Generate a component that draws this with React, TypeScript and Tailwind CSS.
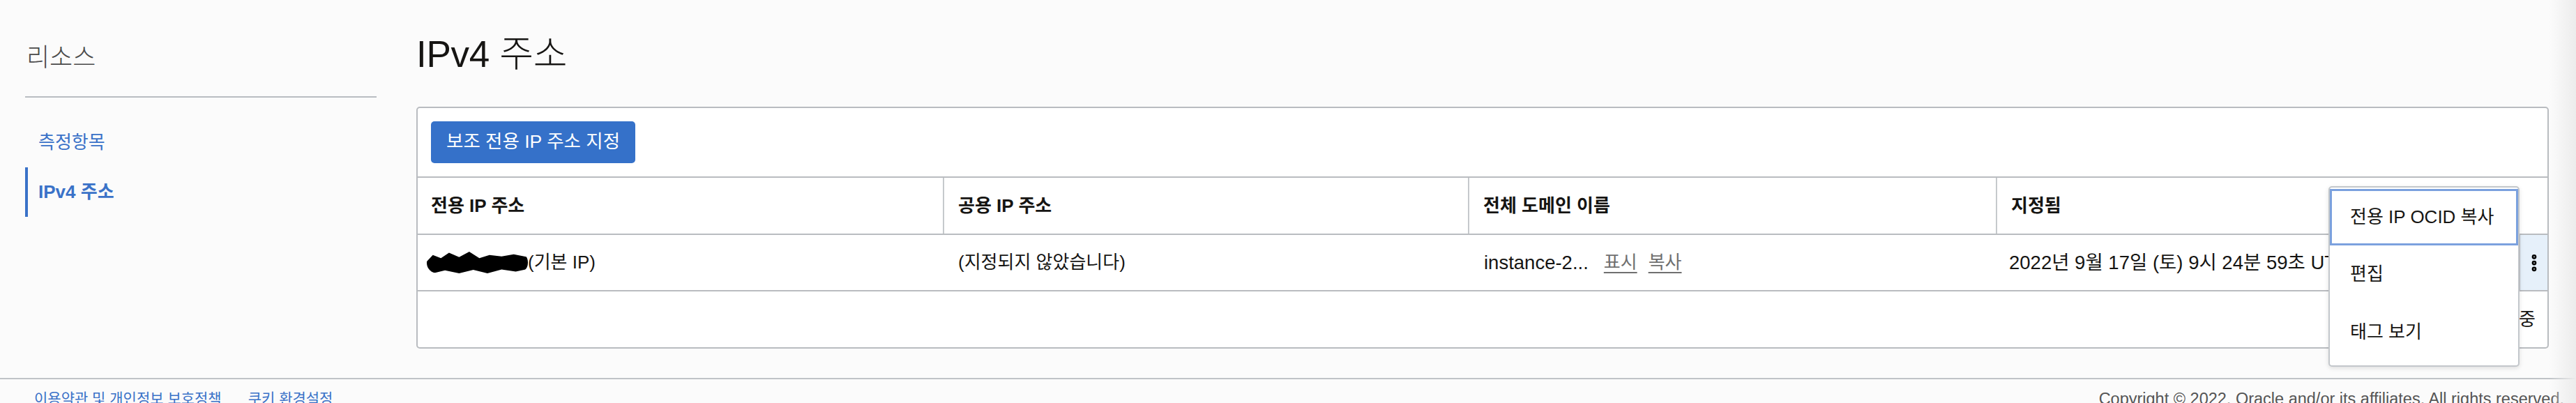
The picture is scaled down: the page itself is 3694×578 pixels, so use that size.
import { EllipsisVertical } from "lucide-react";

const font = "font-['Liberation_Sans','Noto_Sans_CJK_KR',sans-serif]";

const columns = ["전용 IP 주소", "공용 IP 주소", "전체 도메인 이름", "지정됨"];

export default function App() {
  return (
    <div className={`relative h-[578px] w-[3694px] overflow-hidden bg-[#fbfbfb] text-[#161513] ${font}`}>
      <div className="flex h-[542px]">
        <Sidebar />
        <main className="ml-[57px] w-[3058px] pt-[45px]">
          <h1 className="text-[53px] font-light leading-[66px] tracking-[-0.3px]">IPv4 주소</h1>
          <AddressTable />
        </main>
      </div>
      <footer className="flex justify-between border-t-2 border-[#bfc3c7] px-[49px] pt-[13px] text-[21px] leading-[30px]">
        <div className="flex gap-[38px] text-[#3a72c8]">
          <span>이용약관 및 개인정보 보호정책</span>
          <span>쿠키 환경설정</span>
        </div>
        <span className="mr-[-32px] text-[23.5px] text-[#555]">
          Copyright © 2022, Oracle and/or its affiliates. All rights reserved.
        </span>
      </footer>
      {/* side shadow at the right edge */}
      <div className="pointer-events-none absolute right-0 top-0 h-full w-[38px] bg-gradient-to-r from-[#fbfbfb]/0 to-[#ececec]" />
    </div>
  );
}

function Sidebar() {
  return (
    <aside className="ml-[36px] w-[504px] pt-[58px]">
      <div className="pl-[2px] text-[36px] font-light leading-[50px] text-[#4a4a4a]">리소스</div>
      <div className="mt-[30px] h-[2px] bg-[#b9bdc1]" />
      <nav className="mt-[28px] grid text-[26px]">
        <a className="flex h-[72px] items-center border-l-4 border-transparent pl-[15px] text-[#3a72c8]">측정항목</a>
        <a className="flex h-[71px] items-center border-l-4 border-[#3a72c8] pl-[15px] font-bold text-[#3a72c8]">IPv4 주소</a>
      </nav>
    </aside>
  );
}

function AddressTable() {
  return (
    <section className="relative mt-[42px] rounded-[5px] border-2 border-[#b9bcc0] bg-white">
      <div className="px-[19px] pb-[19px] pt-[19px]">
        <button className="h-[60px] rounded-[5px] bg-[#3571c9] px-[22px] text-[26.5px] text-white">
          보조 전용 IP 주소 지정
        </button>
      </div>

      <div className="grid grid-cols-[753px_753px_757px_750px_1fr] border-y-2 border-[#b9bcc0] text-[26px] font-bold">
        {columns.map((column, index) => (
          <div
            key={column}
            className={`flex h-[80px] items-center pl-[19px] ${index > 0 ? "border-l-2 border-[#c6c9cc] pl-[20px]" : ""}`}
          >
            {column}
          </div>
        ))}
        <div />
      </div>

      <div className="grid grid-cols-[753px_753px_757px_750px_1fr] border-b-2 border-[#b9bcc0] text-[26px]">
        <div className="flex h-[79px] items-center pl-[13px]">
          <span className="inline-block h-[31px] w-[145px] rounded-[15px] bg-black [clip-path:polygon(0_45%,6%_15%,14%_30%,22%_5%,32%_25%,42%_0,52%_30%,62%_15%,74%_22%,86%_12%,100%_25%,100%_80%,88%_92%,74%_82%,60%_100%,46%_84%,32%_100%,18%_86%,6%_100%,0_80%)]" />
          (기본 IP)
        </div>
        <div className="flex items-center pl-[22px]">(지정되지 않았습니다)</div>
        <div className="flex items-center pl-[23px] text-[27.5px]">
          <span className="mr-[22px]">instance-2...</span>
          <span className="mr-[16px] text-[26px] text-[#6f6f6f] underline underline-offset-[5px]">표시</span>
          <span className="text-[26px] text-[#6f6f6f] underline underline-offset-[5px]">복사</span>
        </div>
        <div className="flex items-center overflow-hidden whitespace-nowrap pl-[19px] text-[27.5px]">
          2022년 9월 17일 (토) 9시 24분 59초 UTC
        </div>
        <div className="flex items-center justify-center border-l-2 border-[#b9bcc0] bg-[#e6f0fa]">
          <EllipsisVertical size={30} strokeWidth={3.4} className="text-black" />
        </div>
      </div>

      <div className="flex h-[80px] items-center justify-end pr-[17px] text-[26px]">1개 항목 표시 중</div>

      <ActionMenu />
    </section>
  );
}

function ActionMenu() {
  return (
    <div className="absolute left-[2740px] top-[112px] z-10 w-[274px] rounded-[5px] border-2 border-[#c3c7cb] bg-white pb-[6px] pt-[2px] text-[26px] shadow-[0_2px_6px_rgba(0,0,0,0.12)]">
      <div className="flex h-[81px] items-center border-[3px] border-[#7ba1de] pl-[26px]">전용 IP OCID 복사</div>
      <div className="flex h-[83px] items-center pl-[29px]">편집</div>
      <div className="flex h-[83px] items-center pl-[29px]">태그 보기</div>
    </div>
  );
}
